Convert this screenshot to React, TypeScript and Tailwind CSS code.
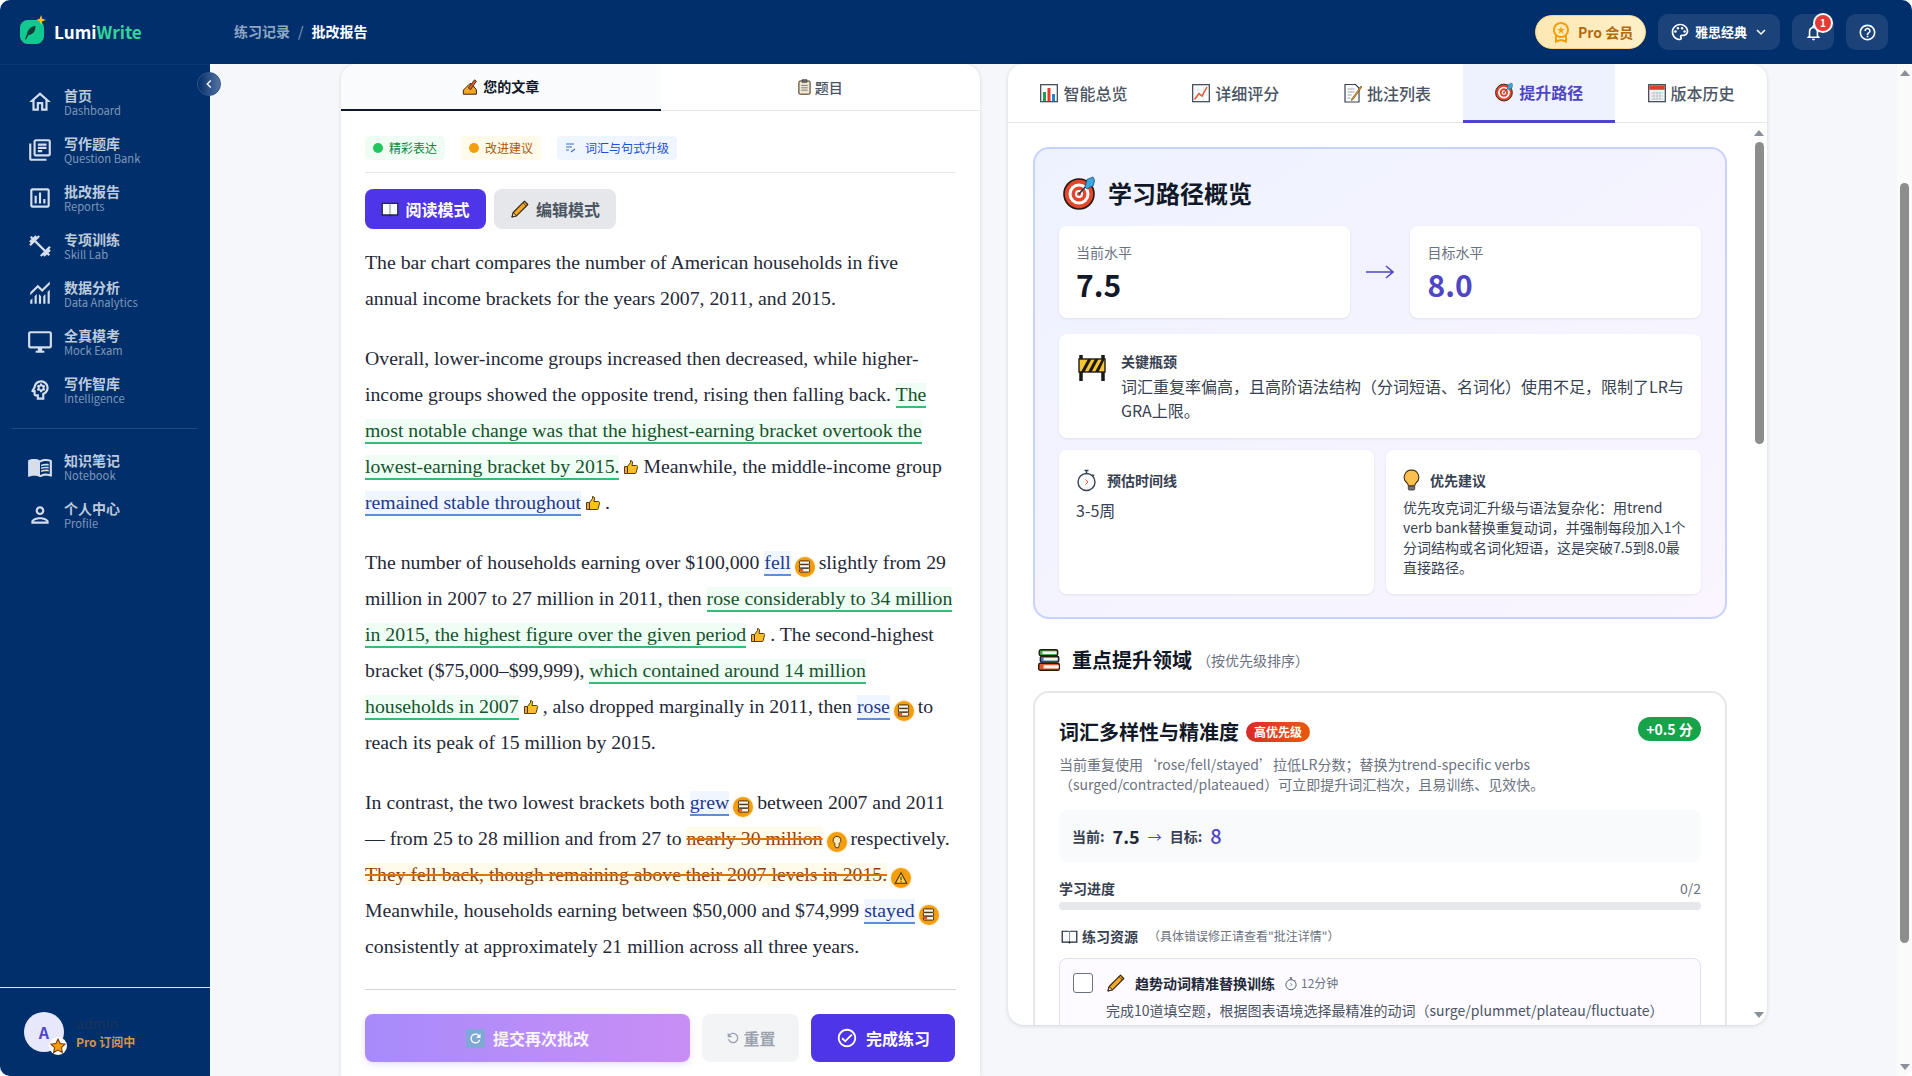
import type { ReactNode } from 'react'
import {
  MdChevronLeft,
  MdExpandMore,
  MdFitnessCenter,
  MdOutlineAssessment,
  MdOutlineCheckCircle,
  MdOutlineDesktopWindows,
  MdOutlineHelpOutline,
  MdOutlineHome,
  MdOutlineLibraryBooks,
  MdOutlineMenuBook,
  MdOutlineNotifications,
  MdOutlinePalette,
  MdOutlinePerson,
  MdOutlinePsychology,
  MdOutlineWorkspacePremium,
  MdRefresh,
} from 'react-icons/md'

const Monitoring = ({ className }: { className?: string }) => (
  <svg viewBox="0 0 24 24" className={className} fill="currentColor">
    <path d="M3 21v-3l2-2v5H3zm4 0v-7l2-2v9H7zm4 0v-9l2 2v7h-2zm4 0v-7l2-2v9h-2zm4 0V10l2-2v13h-2zM3 13.2V10.4l7-7 4 4 7-7v2.8l-7 7-4-4-7 7z" />
  </svg>
)

/* ---- small emoji style drawings ---- */
const ThumbUp = () => (
  <svg viewBox="0 0 16 16" className="inline-block w-[16px] h-[16px] align-[-2px] mx-[4px]">
    <path d="M1.5 7.5h3v7h-3z" fill="#f5a623" stroke="#3b2a12" strokeWidth="0.9" />
    <path d="M4.5 7.5 7.5 3.5V1.5c1.5 0 2.2 1 2 2.5L9 6.5h4.5c1 0 1.3 1 1 1.7l-1.3 5.4c-.2.6-.6.9-1.2.9H4.5z" fill="#fbbf24" stroke="#3b2a12" strokeWidth="0.9" />
  </svg>
)

const Books = ({ className }: { className: string }) => (
  <svg viewBox="0 0 24 24" className={className}>
    <rect x="3" y="2.5" width="17" height="5.5" rx="1.5" fill="#4ca64c" stroke="#2b1a10" strokeWidth="1.3" />
    <rect x="6" y="4" width="13" height="2.5" fill="#f7f3e8" />
    <rect x="4" y="8.5" width="17" height="5.5" rx="1.5" fill="#3f7cc4" stroke="#2b1a10" strokeWidth="1.3" />
    <rect x="7" y="10" width="13" height="2.5" fill="#f7f3e8" />
    <rect x="2.5" y="15" width="19" height="6.5" rx="1.5" fill="#e2572b" stroke="#2b1a10" strokeWidth="1.3" />
    <rect x="7" y="16.8" width="14" height="3" fill="#f7f3e8" />
  </svg>
)

const CircleMark = ({ children }: { children: ReactNode }) => (
  <span className="inline-flex items-center justify-center w-[20px] h-[20px] rounded-full bg-[#f59e0b] align-[-4px] mx-[4px] shadow-[0_0_2px_rgba(245,158,11,0.6)]">
    {children}
  </span>
)

const BookMark = () => (
  <CircleMark>
    <svg viewBox="0 0 14 14" className="w-[13px] h-[13px]">
      <rect x="1.5" y="1" width="11" height="3.6" rx="1" fill="#f7f3e8" stroke="#33240f" strokeWidth="1" />
      <rect x="1.5" y="5" width="11" height="3.6" rx="1" fill="#f7f3e8" stroke="#33240f" strokeWidth="1" />
      <rect x="1.5" y="9" width="11" height="4" rx="1" fill="#f7f3e8" stroke="#33240f" strokeWidth="1" />
      <rect x="2" y="9.5" width="3.5" height="3" fill="#e2572b" />
    </svg>
  </CircleMark>
)

const BulbMark = () => (
  <CircleMark>
    <svg viewBox="0 0 16 16" className="w-[14px] h-[14px]" fill="#fde9b8" stroke="#3b2a12" strokeWidth="1">
      <path d="M8 1.5a4.5 4.5 0 0 0-2.5 8.2V12l1 2.5h3L10.5 12V9.7A4.5 4.5 0 0 0 8 1.5z" />
    </svg>
  </CircleMark>
)

const WarnMark = () => (
  <CircleMark>
    <svg viewBox="0 0 16 16" className="w-[14px] h-[14px]" fill="none" stroke="#3b2a12" strokeWidth="1.2">
      <path d="M8 2 14.5 14h-13z" fill="#fcd34d" />
      <path d="M8 6.5v4M8 11.5v1.2" />
    </svg>
  </CircleMark>
)

const PencilEmoji = ({ className }: { className: string }) => (
  <svg viewBox="0 0 20 20" className={className}>
    <path d="M14.5 2.2 17.8 5.5 6.5 16.8 2 18l1.2-4.5z" fill="#f5a623" stroke="#33240f" strokeWidth="1.1" strokeLinejoin="round" />
    <path d="M3.2 13.5 6.5 16.8 2 18z" fill="#f3d9b0" stroke="#33240f" strokeWidth="1" strokeLinejoin="round" />
    <path d="M13 3.7 16.3 7" stroke="#33240f" strokeWidth="0.8" />
  </svg>
)

const WritingHand = () => (
  <svg viewBox="0 0 20 20" className="w-[18px] h-[18px]">
    <path d="M1.5 18v-4.5L8 7l2-1 6 7v5z" fill="#f5a623" stroke="#33240f" strokeWidth="1.1" strokeLinejoin="round" />
    <path d="M14 2 7 11l2.5 2L16 3.500z" fill="#e2572b" stroke="#33240f" strokeWidth="0.9" strokeLinejoin="round" />
  </svg>
)

const ClipboardEmoji = () => (
  <svg viewBox="0 0 16 20" className="w-[13px] h-[16px]">
    <rect x="1" y="2.5" width="14" height="16.5" rx="1.5" fill="#f2e6cf" stroke="#33240f" strokeWidth="1.2" />
    <rect x="5" y="1" width="6" height="3" fill="#6b7280" stroke="#33240f" strokeWidth="0.8" />
    <path d="M4 8h8M4 11h8M4 14h8" stroke="#6b7280" strokeWidth="1.1" />
  </svg>
)

const OpenBook = ({ className }: { className: string }) => (
  <svg viewBox="0 0 20 18" className={className}>
    <path d="M0.500 2h8.500l1 1 1-1h8.500v14.500h-7.500l-2 1-2-1H0.500z" fill="#1e293b" />
    <path d="M2 3.300h7.700v11.700H2zM10.300 3.300H18v11.700h-7.700z" fill="#f8fafc" />
  </svg>
)

const BarEmoji = () => (
  <svg viewBox="0 0 18 20" className="w-[18px] h-[20px]">
    <rect x="0.7" y="1.7" width="16.6" height="17" fill="#fff" stroke="#374151" strokeWidth="1.2" />
    <rect x="3" y="9" width="3" height="9" fill="#22a04a" />
    <rect x="7.5" y="5" width="3" height="13" fill="#dc3f2e" />
    <rect x="12" y="11" width="3" height="7" fill="#2f7fd0" />
  </svg>
)

const TrendEmoji = () => (
  <svg viewBox="0 0 18 20" className="w-[18px] h-[20px]">
    <rect x="0.7" y="1.7" width="16.6" height="17" fill="#fff" stroke="#374151" strokeWidth="1.2" />
    <path d="M1 7h16M1 12h16M6 2v16M11.5 2v16" stroke="#d8dde5" strokeWidth="0.6" />
    <path d="M2.5 16.5 7 10.5l3 2.5 5-9" fill="none" stroke="#e2572b" strokeWidth="1.5" />
  </svg>
)

const MemoEmoji = () => (
  <svg viewBox="0 0 18 20" className="w-[18px] h-[20px]">
    <path d="M1 1.5h10.5L15 5v14H1z" fill="#fff" stroke="#374151" strokeWidth="1.2" />
    <path d="M3.5 6h7M3.5 9h7M3.5 12h4M3.5 15h3" stroke="#9ca3af" strokeWidth="1" />
    <path d="M17 3 8 15.5l-.8 2 1.9-1L18 4z" fill="#f5a623" stroke="#33240f" strokeWidth="0.5" />
  </svg>
)

const TargetEmoji = ({ className }: { className: string }) => (
  <svg viewBox="0 0 34 34" className={className}>
    <circle cx="16" cy="18" r="15" fill="#e2462b" stroke="#241712" strokeWidth="1.6" />
    <circle cx="16" cy="18" r="10.5" fill="#fff" />
    <circle cx="16" cy="18" r="7.5" fill="#e2462b" />
    <circle cx="16" cy="18" r="4" fill="#fff" />
    <circle cx="16" cy="18" r="2" fill="#e2462b" />
    <path d="M16 18 25 8" stroke="#1e3a5f" strokeWidth="1.6" />
    <path d="M22 11 24 3.5l6-2.5 1.5 3-1 5.5-6.5 3.5z" fill="#38a9e0" stroke="#1e3a5f" strokeWidth="0.7" />
  </svg>
)

const CalendarEmoji = () => (
  <svg viewBox="0 0 18 20" className="w-[18px] h-[20px]">
    <rect x="0.7" y="1.7" width="16.6" height="17" fill="#f3f4f6" stroke="#374151" strokeWidth="1.2" />
    <rect x="1.3" y="2.3" width="15.4" height="4.5" fill="#dc3f2e" />
    <path d="M3 10h12M3 13h12M3 16h12M6 8.5V17M9 8.5V17M12 8.5V17" stroke="#b6bcc6" strokeWidth="0.8" />
  </svg>
)

const Barrier = () => (
  <svg viewBox="0 0 28 28" className="w-[28px] h-[28px] mt-[3px]">
    <path d="M3 1v26M25 1v26" stroke="#1c1917" strokeWidth="3.5" />
    <rect x="1" y="5" width="26" height="13" fill="#f7c52d" stroke="#1c1917" strokeWidth="1.4" />
    <path d="M3 18 10 5h3.500L6.500 18zM10 18 17 5h3.500l-7 13zM17 18 24 5h2v1.500L20.500 18z" fill="#1c1917" />
  </svg>
)

const Stopwatch = ({ className, hand = '#e2572b' }: { className: string; hand?: string }) => (
  <svg viewBox="0 0 20 24" className={className} fill="none" stroke="#374151" strokeWidth="1.4">
    <circle cx="10" cy="14" r="8.500" fill="#f9fafb" />
    <path d="M8 2.500h4M10 2.500v3M16 6.500l1.500 1.500" />
    <path d="M9 11.500l2.500 2.500L9 16.500" stroke={hand} strokeWidth="1" />
  </svg>
)

const BulbEmoji = () => (
  <svg viewBox="0 0 18 24" className="w-[17px] h-[22px]">
    <path d="M9 1a8 8 0 0 0-5 14.200c1 1 1.500 2 1.500 3.300h7c0-1.300.5-2.300 1.500-3.300A8 8 0 0 0 9 1z" fill="#fbbf4d" stroke="#33240f" strokeWidth="1.1" />
    <rect x="5.500" y="18.500" width="7" height="4.500" rx="1.500" fill="#6b7280" stroke="#33240f" strokeWidth="0.8" />
  </svg>
)

const Logo = () => (
  <svg viewBox="0 0 32 32" className="w-[32px] h-[32px] mb-[4px]">
    <rect x="4" y="6" width="24" height="24" rx="8" fill="#10c98f" />
    <path d="M19 12c-4 .5-7 3-8 8l-2 5 1 .5 2.500-4.500c5-.5 7-4 7-9z" fill="#0f3b3a" />
    <path d="M25 1l1.300 3.700L30 6l-3.700 1.300L25 11l-1.300-3.700L20 6l3.700-1.300z" fill="#fbbf24" />
  </svg>
)

const navTop = [
  { icon: MdOutlineHome, zh: '首页', en: 'Dashboard' },
  { icon: MdOutlineLibraryBooks, zh: '写作题库', en: 'Question Bank' },
  { icon: MdOutlineAssessment, zh: '批改报告', en: 'Reports' },
  { icon: MdFitnessCenter, zh: '专项训练', en: 'Skill Lab' },
  { icon: Monitoring, zh: '数据分析', en: 'Data Analytics' },
  { icon: MdOutlineDesktopWindows, zh: '全真模考', en: 'Mock Exam' },
  { icon: MdOutlinePsychology, zh: '写作智库', en: 'Intelligence' },
]

const navBottom = [
  { icon: MdOutlineMenuBook, zh: '知识笔记', en: 'Notebook' },
  { icon: MdOutlinePerson, zh: '个人中心', en: 'Profile' },
]

type NavEntry = (typeof navTop)[number]

const NavRow = ({ item }: { item: NavEntry }) => {
  const Icon = item.icon
  return (
    <div className="flex items-center h-[48px] pl-[27px]">
      <Icon className="w-[26px] h-[26px] text-[#d5deea] shrink-0" />
      <div className="ml-[11px]">
        <div className="text-[14px] leading-[16px] font-semibold text-[#bccadc]">{item.zh}</div>
        <div className="text-[11.2px] leading-[15px] text-[#7f97b9]">{item.en}</div>
      </div>
    </div>
  )
}

const Good = ({ children }: { children: ReactNode }) => (
  <span className="bg-[#f0fdf4] text-[#14532d] border-b-2 border-[#3cb878] pb-[1px]">{children}</span>
)
const Blue = ({ children }: { children: ReactNode }) => (
  <span className="bg-[#eff6ff] text-[#1e3a8a] border-b-2 border-[#5b8fd6] pb-[1px]">{children}</span>
)
const Strike = ({ children }: { children: ReactNode }) => (
  <span className="bg-[#fffbeb] text-[#92400e] line-through decoration-2 decoration-[#d97706]">{children}</span>
)

const tabs = [
  { icon: <BarEmoji />, label: '智能总览' },
  { icon: <TrendEmoji />, label: '详细评分' },
  { icon: <MemoEmoji />, label: '批注列表' },
  { icon: <TargetEmoji className="w-[19px] h-[20px]" />, label: '提升路径', active: true },
  { icon: <CalendarEmoji />, label: '版本历史' },
]

const ScrollArrow = ({ down }: { down?: boolean }) => (
  <span className={down ? 'block w-0 h-0 border-x-[5px] border-x-transparent border-t-[6px] border-t-[#8a8f98]' : 'block w-0 h-0 border-x-[5px] border-x-transparent border-b-[6px] border-b-[#8a8f98]'} />
)

export default function App() {
  return (
    <div className="w-[1912px] h-[1076px] flex flex-col overflow-hidden rounded-[10px] bg-[#f5f7fa] font-['Noto_Sans_CJK_SC','Noto_Sans',sans-serif]">
      {/* Top bar */}
      <header className="h-[64px] shrink-0 bg-[#002f6b] flex items-center">
        <div className="w-[210px] flex items-center pl-[16px] shrink-0">
          <Logo />
          <span className="ml-[6px] text-[17.2px] font-semibold text-white">
            Lumi<span className="text-[#34d399]">Write</span>
          </span>
        </div>
        <div className="ml-[24px] mb-[1px] flex items-center text-[14px] font-semibold">
          <span className="text-[#8fa5c4]">练习记录</span>
          <span className="text-[#8fa5c4] mx-[8px] font-normal">/</span>
          <span className="text-white">批改报告</span>
        </div>
        <div className="ml-auto flex items-center pr-[24px]">
          <div className="w-[111px] h-[34px] rounded-full bg-gradient-to-r from-[#fde8b4] to-[#fff0c8] border border-[#f7d48a] flex items-center pl-[13px]">
            <MdOutlineWorkspacePremium className="w-[24px] h-[24px] text-[#f59e0b]" />
            <span className="ml-[5px] text-[14px] font-semibold text-[#b4690e]">Pro 会员</span>
          </div>
          <div className="ml-[12px] w-[122px] h-[36px] rounded-[10px] bg-[#1c4379] flex items-center pl-[12px] text-white">
            <MdOutlinePalette className="w-[20px] h-[20px]" />
            <span className="ml-[5px] text-[13px] font-semibold">雅思经典</span>
            <MdExpandMore className="w-[18px] h-[18px] ml-[5px]" />
          </div>
          <div className="relative ml-[12px] w-[42px] h-[36px] rounded-[10px] bg-[#1c4379] flex items-center justify-center text-white">
            <MdOutlineNotifications className="w-[19px] h-[19px]" />
            <span className="absolute left-[23px] top-[1px] w-[16px] h-[16px] rounded-full bg-[#e53935] ring-2 ring-white text-[10px] leading-[16px] font-bold text-center">1</span>
          </div>
          <div className="ml-[12px] w-[42px] h-[36px] rounded-[10px] bg-[#1c4379] flex items-center justify-center text-white">
            <MdOutlineHelpOutline className="w-[19px] h-[19px]" />
          </div>
        </div>
      </header>

      <div className="flex-1 flex min-h-0">
        {/* Sidebar */}
        <aside className="relative w-[210px] shrink-0 bg-[#002f6b] flex flex-col border-t border-[#0a3a75]">
          <button className="absolute right-[-11px] top-[7px] w-[24px] h-[24px] rounded-full bg-gradient-to-r from-[#002f6b] to-[#54749f] border border-[#2c5489] flex items-center justify-center text-white z-10">
            <MdChevronLeft className="w-[16px] h-[16px]" />
          </button>
          <nav className="pt-[13px]">
            {navTop.map((item) => (
              <NavRow key={item.en} item={item} />
            ))}
          </nav>
          <div className="mx-[12px] w-[185px] h-px bg-[#1f4a80] mt-[14px] mb-[14px]"></div>
          <nav>
            {navBottom.map((item) => (
              <NavRow key={item.en} item={item} />
            ))}
          </nav>
          <div className="mt-auto h-[89px] border-t border-[#dde6f0] flex items-center pl-[24px]">
            <div className="relative w-[40px] h-[40px] rounded-full bg-[#e8e8fc] flex items-center justify-center text-[16px] font-bold text-[#4f46c5]">
              A
              <span className="absolute left-[25px] top-[25px] w-[18px] h-[18px] rounded-full bg-white flex items-center justify-center text-[#f59e0b]">
                <svg viewBox="0 0 16 16" className="w-[16px] h-[16px]">
                  <path d="M8 1l2.100 4.600 5 .6-3.700 3.400 1 5-4.400-2.500-4.400 2.500 1-5L.9 6.200l5-.6z" fill="#f59e0b" stroke="#7c3d0a" strokeWidth="1.100" />
                </svg>
              </span>
            </div>
            <div className="ml-[12px]">
              <div className="text-[14px] leading-[20px] text-[#1d3357]">admin</div>
              <div className="text-[12px] leading-[18px] font-semibold text-[#d4924f]">Pro 订阅中</div>
            </div>
          </div>
        </aside>

        {/* Essay panel */}
        <section className="ml-[131px] w-[639px] shrink-0 bg-white rounded-t-[16px] shadow-[0_0_4px_rgba(0,0,0,0.12)] flex flex-col">
          <div className="flex h-[47px] border-b border-[#e5e7eb] shrink-0">
            <div className="flex-1 flex items-center justify-center gap-[3px] text-[14px] font-semibold text-[#111827] bg-[#fafbfd] border-b-2 border-[#111827] rounded-tl-[16px] h-[47px]">
              <WritingHand />
              您的文章
            </div>
            <div className="flex-1 flex items-center justify-center gap-[4px] text-[14px] font-medium text-[#4b5563]">
              <ClipboardEmoji />
              题目
            </div>
          </div>
          <div className="px-[24px] flex-1">
            <div className="flex gap-[16px] pt-[25px] pb-[12px] border-b border-[#e5e7eb] text-[12px]">
              <span className="h-[24px] px-[8px] rounded bg-[#f0fdf4] text-[#15803d] flex items-center gap-[6px]">
                <i className="w-[10px] h-[10px] rounded-full bg-[#22c55e]"></i>精彩表达
              </span>
              <span className="h-[24px] px-[8px] rounded bg-[#fffbeb] text-[#b45309] flex items-center gap-[6px]">
                <i className="w-[10px] h-[10px] rounded-full bg-[#f59e0b]"></i>改进建议
              </span>
              <span className="h-[24px] px-[8px] rounded bg-[#eff6ff] text-[#1d4ed8] flex items-center gap-[8px]">
                <svg viewBox="0 0 12 12" className="w-[12px] h-[12px]" fill="none" stroke="#3b6fc4" strokeWidth="1.200">
                  <path d="M1 2h8M1 5h6M1 8h3M6 10l4-3" />
                </svg>
                词汇与句式升级
              </span>
            </div>
            <div className="flex gap-[8px] mt-[16px]">
              <button className="w-[121px] h-[40px] rounded-[8px] bg-[#4f35e8] text-white text-[16px] font-semibold flex items-center justify-center gap-[6px]">
                <OpenBook className="w-[18px] h-[16px]" />
                阅读模式
              </button>
              <button className="w-[122px] h-[40px] rounded-[8px] bg-[#e5e7eb] text-[#4b5563] text-[16px] font-semibold flex items-center justify-center gap-[6px]">
                <PencilEmoji className="w-[20px] h-[20px]" />
                编辑模式
              </button>
            </div>

            <div className="mt-[15px] whitespace-nowrap font-['Liberation_Serif',serif] text-[19.75px] leading-[36px] text-[#1f2937]">
              <p className="mb-[24px]">
                The bar chart compares the number of American households in five<br />
                annual income brackets for the years 2007, 2011, and 2015.
              </p>
              <p className="mb-[24px]">
                Overall, lower-income groups increased then decreased, while higher-<br />
                income groups showed the opposite trend, rising then falling back. <Good>The</Good><br />
                <Good>most notable change was that the highest-earning bracket overtook the</Good><br />
                <Good>lowest-earning bracket by 2015.</Good><ThumbUp />Meanwhile, the middle-income group<br />
                <Blue>remained stable throughout</Blue><ThumbUp />.
              </p>
              <p className="mb-[24px]">
                The number of households earning over $100,000 <Blue>fell</Blue><BookMark />slightly from 29<br />
                million in 2007 to 27 million in 2011, then <Good>rose considerably to 34 million</Good><br />
                <Good>in 2015, the highest figure over the given period</Good><ThumbUp />. The second-highest<br />
                bracket ($75,000–$99,999), <Good>which contained around 14 million</Good><br />
                <Good>households in 2007</Good><ThumbUp />, also dropped marginally in 2011, then <Blue>rose</Blue><BookMark />to<br />
                reach its peak of 15 million by 2015.
              </p>
              <p>
                In contrast, the two lowest brackets both <Blue>grew</Blue><BookMark />between 2007 and 2011<br />
                — from 25 to 28 million and from 27 to <Strike>nearly 30 million</Strike><BulbMark />respectively.<br />
                <Strike>They fell back, though remaining above their 2007 levels in 2015.</Strike><WarnMark /><br />
                Meanwhile, households earning between $50,000 and $74,999 <Blue>stayed</Blue><BookMark /><br />
                consistently at approximately 21 million across all three years.
              </p>
            </div>

            <div className="mt-[25px] pt-[24px] border-t border-[#d1d5db] flex gap-[12px]">
              <button className="w-[325px] h-[48px] rounded-[8px] bg-gradient-to-r from-[#a78bfa] to-[#c98ef5] text-white/90 text-[16px] font-semibold flex items-center justify-center gap-[8px] shadow-[0_2px_6px_rgba(167,139,250,0.3)]">
                <span className="w-[19px] h-[19px] bg-[#7fa8d4] flex items-center justify-center">
                  <MdRefresh className="w-[15px] h-[15px] text-white" />
                </span>
                提交再次批改
              </button>
              <button className="w-[97px] h-[48px] rounded-[8px] bg-[#f3f4f6] text-[#9ca3af] text-[16px] font-semibold flex items-center justify-center gap-[2px]">
                <MdRefresh className="w-[16px] h-[16px] -scale-x-100" />
                重置
              </button>
              <button className="w-[144px] h-[48px] rounded-[8px] bg-[#4f35e8] text-white text-[16px] font-semibold flex items-center justify-center gap-[8px]">
                <MdOutlineCheckCircle className="w-[22px] h-[22px]" />
                完成练习
              </button>
            </div>
          </div>
        </section>

        {/* Report panel */}
        <section className="relative ml-[28px] w-[759px] h-[961px] shrink-0 bg-white rounded-[16px] shadow-[0_1px_4px_rgba(0,0,0,0.14)] flex flex-col overflow-hidden">
          <div className="flex h-[59px] shrink-0 border-b border-[#e5e7eb]">
            {tabs.map((tab) => (
              <div
                key={tab.label}
                className={
                  tab.active
                    ? 'flex-1 flex items-center justify-center gap-[5px] text-[16px] font-semibold text-[#4f46c5] bg-[#eef2ff] border-b-[3px] border-[#4f46c5] h-[59px]'
                    : 'flex-1 flex items-center justify-center gap-[5px] text-[16px] font-medium text-[#4b5563]'
                }
              >
                {tab.icon}
                {tab.label}
              </div>
            ))}
          </div>

          <div className="flex-1 overflow-hidden pl-[25px] pr-[40px] pt-[24px]">
            <div className="rounded-[16px] border-2 border-[#c7d2fe] bg-gradient-to-br from-[#eef2ff] to-[#faf5ff] px-[24px] pt-[26px] h-[472px]">
              <div className="flex items-center gap-[11px] h-[36px] pl-[4px]">
                <TargetEmoji className="w-[34px] h-[34px]" />
                <h2 className="text-[24px] font-bold text-[#111827]">学习路径概览</h2>
              </div>
              <div className="flex items-center mt-[15px]">
                <div className="w-[291px] h-[92px] bg-white rounded-[8px] shadow-[0_1px_3px_rgba(0,0,0,0.08)] pl-[17px] pt-[16px]">
                  <div className="text-[14px] leading-[20px] text-[#6b7280]">当前水平</div>
                  <div className="text-[30px] leading-[40px] mt-[2px] font-bold text-[#111827]">7.5</div>
                </div>
                <div className="w-[61px] flex justify-center">
                  <svg viewBox="0 0 28 14" className="w-[28px] h-[14px]" fill="none" stroke="#4f46c5" strokeWidth="1.500">
                    <path d="M0 7h27M20 1l7 6-7 6" />
                  </svg>
                </div>
                <div className="w-[291px] h-[92px] bg-white rounded-[8px] shadow-[0_1px_3px_rgba(0,0,0,0.08)] pl-[17px] pt-[16px]">
                  <div className="text-[14px] leading-[20px] text-[#6b7280]">目标水平</div>
                  <div className="text-[30px] leading-[40px] mt-[2px] font-bold text-[#4f46c5]">8.0</div>
                </div>
              </div>
              <div className="mt-[16px] h-[104px] bg-white rounded-[8px] shadow-[0_1px_3px_rgba(0,0,0,0.08)] flex pl-[19px] pt-[17px]">
                <Barrier />
                <div className="ml-[15px] w-[570px]">
                  <div className="text-[14px] leading-[20px] font-semibold text-[#374151]">关键瓶颈</div>
                  <div className="text-[16px] leading-[24px] text-[#374151] mt-[3px]">
                    词汇重复率偏高，且高阶语法结构（分词短语、名词化）使用不足，限制了LR与GRA上限。
                  </div>
                </div>
              </div>
              <div className="grid grid-cols-2 gap-[12px] mt-[12px]">
                <div className="h-[144px] bg-white rounded-[8px] shadow-[0_1px_3px_rgba(0,0,0,0.08)] pl-[17px] pt-[18px]">
                  <div className="flex items-center gap-[10px] h-[24px]">
                    <Stopwatch className="w-[21px] h-[24px]" />
                    <span className="text-[14px] font-semibold text-[#374151]">预估时间线</span>
                  </div>
                  <div className="text-[16px] leading-[24px] mt-[6px] text-[#374151]">3-5周</div>
                </div>
                <div className="h-[144px] bg-white rounded-[8px] shadow-[0_1px_3px_rgba(0,0,0,0.08)] pl-[17px] pr-[12px] pt-[18px]">
                  <div className="flex items-center gap-[10px] h-[24px]">
                    <BulbEmoji />
                    <span className="text-[14px] font-semibold text-[#374151]">优先建议</span>
                  </div>
                  <div className="text-[14px] leading-[20px] mt-[5px] text-[#374151]">
                    优先攻克词汇升级与语法复杂化：用trend verb bank替换重复动词，并强制每段加入1个分词结构或名词化短语，这是突破7.5到8.0最直接路径。
                  </div>
                </div>
              </div>
            </div>

            <div className="flex items-center h-[28px] mt-[27px] pl-[3px]">
              <Books className="w-[26px] h-[26px]" />
              <h3 className="ml-[10px] text-[20px] font-bold text-[#111827]">重点提升领域</h3>
              <span className="ml-[5px] text-[14px] text-[#6b7280]">（按优先级排序）</span>
            </div>

            <div className="mt-[17px] rounded-[16px] border-2 border-[#e5e7eb] bg-white px-[24px] pt-[24px]">
              <div className="flex items-start justify-between">
                <div className="flex items-center h-[28px] mt-[1px]">
                  <h4 className="text-[20px] font-bold text-[#111827]">词汇多样性与精准度</h4>
                  <span className="ml-[7px] w-[64px] h-[20px] rounded-full bg-gradient-to-r from-[#dc2626] to-[#ea580c] text-white text-[12px] font-bold flex items-center justify-center">高优先级</span>
                </div>
                <span className="w-[63px] h-[24px] rounded-full bg-[#16a34a] text-white text-[14px] font-bold flex items-center justify-center">+0.5 分</span>
              </div>
              <p className="text-[14px] leading-[20px] text-[#6b7280] mt-[8px] w-[520px]">
                当前重复使用‘rose/fell/stayed’拉低LR分数；替换为trend-specific verbs（surged/contracted/plateaued）可立即提升词汇档次，且易训练、见效快。
              </p>
              <div className="mt-[16px] h-[52px] rounded-[8px] bg-[#f9fafb] flex items-center pl-[13px] text-[14px] font-semibold text-[#374151]">
                当前:
                <span className="ml-[8px] text-[18px] font-bold text-[#1f2937]">7.5</span>
                <span className="mx-[8px] text-[#4f46c5] font-normal">→</span>
                目标:
                <span className="ml-[8px] text-[20px] font-medium text-[#4f46c5]">8</span>
              </div>
              <div className="flex justify-between mt-[16px] text-[14px] leading-[20px]">
                <span className="font-semibold text-[#374151]">学习进度</span>
                <span className="text-[#6b7280]">0/2</span>
              </div>
              <div className="h-[8px] rounded-full bg-[#e5e7eb] mt-[4px]"></div>
              <div className="flex items-center h-[20px] mt-[16px] pl-[2px]">
                <OpenBook className="w-[17px] h-[15px]" />
                <span className="ml-[4px] text-[14px] font-semibold text-[#374151]">练习资源</span>
                <span className="ml-[10px] text-[12px] text-[#6b7280]">（具体错误修正请查看"批注详情"）</span>
              </div>
              <div className="mt-[12px] rounded-[8px] border border-[#e0e0f0] bg-[#fdfbff] h-[120px] pl-[13px] pt-[14px] flex">
                <span className="w-[20px] h-[20px] border border-[#6b7280] rounded-[3px] bg-white shrink-0"></span>
                <div className="ml-[13px]">
                  <div className="flex items-center h-[20px]">
                    <PencilEmoji className="w-[20px] h-[20px]" />
                    <span className="ml-[9px] text-[14px] font-semibold text-[#1f2937]">趋势动词精准替换训练</span>
                    <Stopwatch className="ml-[10px] w-[12px] h-[15px]" hand="#374151" />
                    <span className="ml-[4px] text-[12px] text-[#6b7280]">12分钟</span>
                  </div>
                  <div className="text-[14px] leading-[20px] mt-[7px] text-[#4b5563]">
                    完成10道填空题，根据图表语境选择最精准的动词（surge/plummet/plateau/fluctuate）
                  </div>
                </div>
              </div>
            </div>
          </div>

          {/* inner scrollbar */}
          <div className="absolute right-[2px] top-[59px] bottom-0 w-[12px] bg-white flex flex-col items-center justify-between py-[7px]">
            <ScrollArrow />
            <ScrollArrow down />
          </div>
          <div className="absolute right-[3px] top-[78px] w-[9px] h-[302px] rounded-full bg-[#8d8d8d]"></div>
        </section>

        {/* page scrollbar */}
        <div className="relative ml-auto w-[15px] shrink-0 bg-[#fafafa] flex flex-col items-center justify-between py-[6px]">
          <ScrollArrow />
          <ScrollArrow down />
          <div className="absolute left-[3px] top-[119px] w-[9px] h-[760px] rounded-full bg-[#8d8d8d]"></div>
        </div>
      </div>
    </div>
  )
}
